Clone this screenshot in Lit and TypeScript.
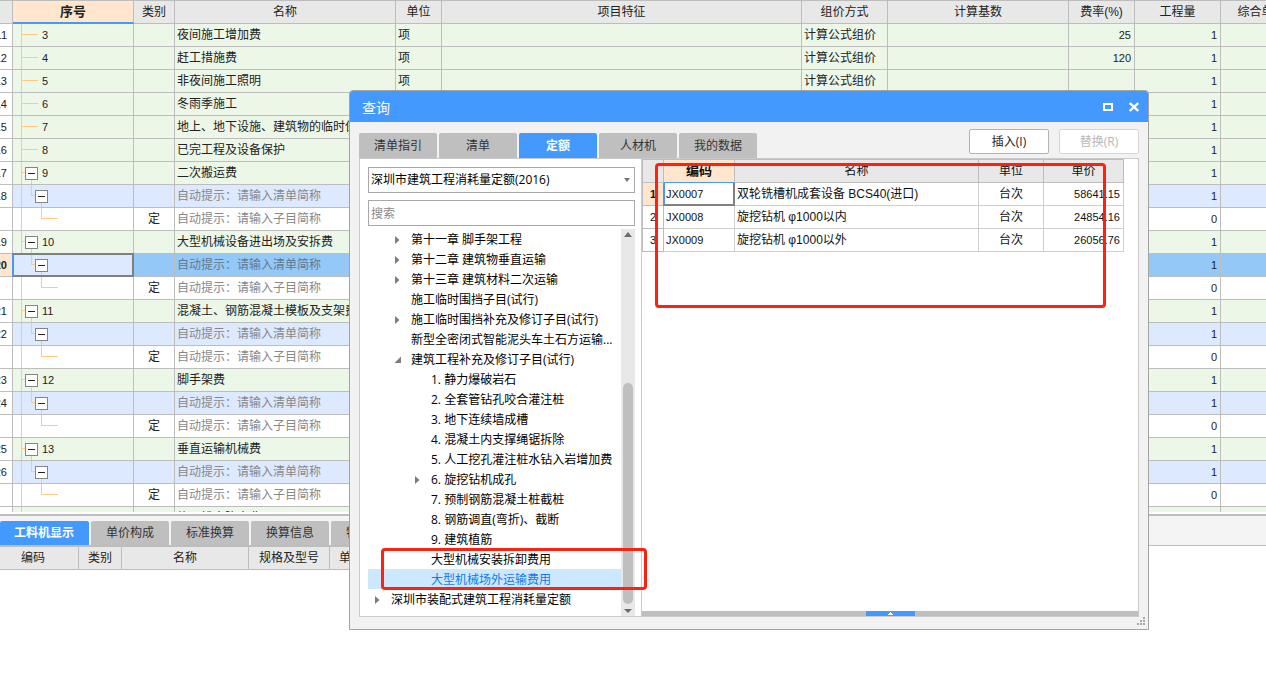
import { LitElement, html, svg, css, nothing } from "lit";
import { customElement, property, state } from "lit/decorators.js";
import { classMap } from "lit/directives/class-map.js";

type Kind = "item" | "list" | "sub";

interface CostRow {
  line: string;
  kind: Kind;
  seq?: string;
  open?: boolean;
  name: string;
  unit?: string;
  method?: string;
  rate?: string;
  qty: string;
  selected?: boolean;
}

const LIST_HINT = "自动提示：请输入清单简称";
const SUB_HINT = "自动提示：请输入子目简称";

const plain = (line: string, seq: string, name: string, rate = ""): CostRow => ({
  line, kind: "item", seq, name, unit: "项", method: "计算公式组价", rate, qty: "1",
});

const group = (line: number, seq: string, name: string, selected = false): CostRow[] => [
  { line: `${line}`, kind: "item", seq, open: true, name, unit: "项", qty: "1" },
  { line: `${line + 1}`, kind: "list", name: LIST_HINT, qty: "1", selected },
  { line: "", kind: "sub", name: SUB_HINT, qty: "0" },
];

const ROWS: CostRow[] = [
  plain("11", "3", "夜间施工增加费", "25"),
  plain("12", "4", "赶工措施费", "120"),
  plain("13", "5", "非夜间施工照明"),
  plain("14", "6", "冬雨季施工"),
  plain("15", "7", "地上、地下设施、建筑物的临时保护设施"),
  plain("16", "8", "已完工程及设备保护"),
  ...group(17, "9", "二次搬运费"),
  ...group(19, "10", "大型机械设备进出场及安拆费", true),
  ...group(21, "11", "混凝土、钢筋混凝土模板及支架费"),
  ...group(23, "12", "脚手架费"),
  ...group(25, "13", "垂直运输机械费"),
  { line: "27", kind: "item", seq: "14", open: true, name: "施工排水降水费", qty: "1" },
];

@customElement("cost-grid")
export class CostGrid extends LitElement {
  static styles = css`
    :host {
      display: block;
      min-height: 0;
      overflow: hidden;
      font: 12px/20px "Liberation Sans", "Noto Sans CJK SC", sans-serif;
      color: #222;
    }
    .grid {
      width: calc(100% + 37px);
      table-layout: fixed;
      border-collapse: separate;
      border-spacing: 0;
      border-top: 1px solid #bdbdbd;
    }
    .c-line { width: 13px; }
    .c-seq { width: 121px; }
    .c-kind { width: 41px; }
    .c-name { width: 221px; }
    .c-unit { width: 46px; }
    .c-method { width: 86px; }
    .c-base { width: 181px; }
    .c-rate { width: 66px; }
    .c-qty { width: 86px; }
    .c-price { width: 82px; }
    th, td {
      box-sizing: border-box;
      height: 23px;
      padding: 0 2px;
      border-right: 1px solid #bdbdbd;
      border-bottom: 1px solid #bdbdbd;
      white-space: nowrap;
      overflow: hidden;
    }
    th { background: #e8e8e8; font-weight: 400; }
    .current-head {
      background: #ffe6cc;
      border-bottom: 2px solid #4499ff;
      font-size: 13px;
      font-weight: 700;
    }
    .item td { background: #ecf7e8; }
    .list td { background: #dde9fe; }
    .sub td { background: #fff; }
    .selected td { background: #93c8f7; }
    tr .line { background: #fff; padding: 0; }
    tr.selected .line { background: #ffe6cc; font-weight: 700; }
    .line-no {
      display: flex;
      justify-content: flex-end;
      padding-right: 5px;
      font-size: 11px;
    }
    tr .tree-cell { padding: 0; position: relative; overflow: visible; }
    tr.selected .tree-cell { background: #dde9fe; }
    tr.selected .tree-cell::after {
      content: "";
      position: absolute;
      inset: -1px;
      border: 2px solid #808080;
      border-left-color: #4499ff;
      pointer-events: none;
    }
    .lines { position: absolute; left: 0; top: 0; }
    .node { display: flex; align-items: center; gap: 4px; height: 22px; font-size: 11px; }
    .node.leaf { padding-left: 29px; }
    .node.parent { padding-left: 12px; }
    .node.child { padding-left: 22px; }
    .toggle {
      position: relative;
      display: block;
      width: 13px;
      height: 13px;
      padding: 0;
      border: 1px solid #858585;
      background: #fff;
    }
    .toggle svg { display: block; }
    .center { text-align: center; }
    .num { text-align: right; font-size: 11px; padding-right: 3px; }
    .hint { color: #888; }
    .selected .hint { color: #64798d; }
  `;

  private lines(r: CostRow) {
    const trunk = r.selected ? "" : "M8.5 0V22";
    const branch =
      r.kind === "item"
        ? r.open ? "M9 10.5H12M18.5 17V22" : "M9 10.5H25"
        : r.kind === "list"
          ? "M18.5 0V10.5H22M28.5 17V22"
          : "M28.5 0V10.5H45";
    return html`<svg class="lines" width="46" height="22" aria-hidden="true">
      ${svg`<path d=${trunk + branch} fill="none" stroke="#ffc980" shape-rendering="crispEdges" />`}
    </svg>`;
  }

  private toggle() {
    return html`<button class="toggle" aria-label="折叠">
      <svg width="11" height="11"><path d="M2 5.5H9" stroke="#222" /></svg>
    </button>`;
  }

  private node(r: CostRow) {
    if (r.kind === "item") {
      return r.open
        ? html`<div class="node parent">${this.toggle()}<span>${r.seq}</span></div>`
        : html`<div class="node leaf"><span>${r.seq}</span></div>`;
    }
    return html`<div class="node child">${r.kind === "list" ? this.toggle() : nothing}</div>`;
  }

  render() {
    return html`
      <table class="grid">
        <colgroup>
          <col class="c-line" /><col class="c-seq" /><col class="c-kind" /><col class="c-name" />
          <col class="c-unit" /><col /><col class="c-method" /><col class="c-base" />
          <col class="c-rate" /><col class="c-qty" /><col class="c-price" />
        </colgroup>
        <thead>
          <tr>
            <th></th><th class="current-head">序号</th><th>类别</th><th>名称</th><th>单位</th>
            <th>项目特征</th><th>组价方式</th><th>计算基数</th><th>费率(%)</th><th>工程量</th>
            <th>综合单价</th>
          </tr>
        </thead>
        <tbody>
          ${ROWS.map(
            (r) => html`<tr class=${classMap({ [r.kind]: true, selected: !!r.selected })}>
              <td class="line"><div class="line-no">${r.line}</div></td>
              <td class="tree-cell">${this.lines(r)}${this.node(r)}</td>
              <td class="center">${r.kind === "sub" ? "定" : ""}</td>
              <td class=${r.kind === "item" ? "" : "hint"}>${r.name}</td>
              <td>${r.unit ?? ""}</td>
              <td></td>
              <td>${r.method ?? ""}</td>
              <td></td>
              <td class="num">${r.rate ?? ""}</td>
              <td class="num">${r.qty}</td>
              <td></td>
            </tr>`
          )}
        </tbody>
      </table>
    `;
  }
}

@customElement("detail-pane")
export class DetailPane extends LitElement {
  static styles = css`
    :host {
      display: block;
      box-sizing: border-box;
      height: 177px;
      border-top: 2px solid #bdbdbd;
      background: #fff;
      font: 12px/20px "Liberation Sans", "Noto Sans CJK SC", sans-serif;
      color: #222;
      overflow: hidden;
    }
    .tabs {
      display: flex;
      gap: 2px;
      padding-top: 5px;
      background: #f4f4f4;
      border-bottom: 1px solid #bdbdbd;
    }
    .tab {
      height: 24px;
      padding: 0 15px;
      border: 0;
      border-radius: 2px 2px 0 0;
      background: #bfbfbf;
      color: #333;
      font: inherit;
      white-space: nowrap;
    }
    .tab.active { padding-left: 14px; background: #4499ff; color: #fff; font-weight: 700; }
    .head {
      width: 640px;
      table-layout: fixed;
      border-collapse: separate;
      border-spacing: 0;
      border-top: 1px solid #bdbdbd;
    }
    .head th {
      box-sizing: border-box;
      height: 23px;
      padding: 0;
      border-right: 1px solid #bdbdbd;
      border-bottom: 1px solid #bdbdbd;
      background: #e8e8e8;
      font-weight: 400;
    }
    .head .code { width: 79px; padding-right: 12px; }
    .kind { width: 43px; }
    .name { width: 127px; }
    .spec { width: 81px; }
    .unit { width: 43px; }
  `;

  render() {
    const tabs = ["工料机显示", "单价构成", "标准换算", "换算信息", "特征及内容"];
    return html`
      <div class="tabs" role="tablist">
        ${tabs.map(
          (t, i) => html`<button role="tab" class="tab ${i === 0 ? "active" : ""}">${t}</button>`
        )}
      </div>
      <table class="head">
        <thead>
          <tr>
            <th class="code">编码</th><th class="kind">类别</th><th class="name">名称</th>
            <th class="spec">规格及型号</th><th class="unit">单位</th><th></th>
          </tr>
        </thead>
      </table>
    `;
  }
}

interface Chapter {
  level: 0 | 1 | 2;
  text: string;
  mark?: "closed" | "open";
  selected?: boolean;
}

const CHAPTERS: Chapter[] = [
  { level: 1, text: "第十一章 脚手架工程", mark: "closed" },
  { level: 1, text: "第十二章 建筑物垂直运输", mark: "closed" },
  { level: 1, text: "第十三章 建筑材料二次运输", mark: "closed" },
  { level: 1, text: "施工临时围挡子目(试行)" },
  { level: 1, text: "施工临时围挡补充及修订子目(试行)", mark: "closed" },
  { level: 1, text: "新型全密闭式智能泥头车土石方运输..." },
  { level: 1, text: "建筑工程补充及修订子目(试行)", mark: "open" },
  { level: 2, text: "1. 静力爆破岩石" },
  { level: 2, text: "2. 全套管钻孔咬合灌注桩" },
  { level: 2, text: "3. 地下连续墙成槽" },
  { level: 2, text: "4. 混凝土内支撑绳锯拆除" },
  { level: 2, text: "5. 人工挖孔灌注桩水钻入岩增加费" },
  { level: 2, text: "6. 旋挖钻机成孔", mark: "closed" },
  { level: 2, text: "7. 预制钢筋混凝土桩截桩" },
  { level: 2, text: "8. 钢筋调直(弯折)、截断" },
  { level: 2, text: "9. 建筑植筋" },
  { level: 2, text: "大型机械安装拆卸费用" },
  { level: 2, text: "大型机械场外运输费用", selected: true },
  { level: 0, text: "深圳市装配式建筑工程消耗量定额", mark: "closed" },
];

@customElement("chapter-tree")
export class ChapterTree extends LitElement {
  static styles = css`
    :host { display: flex; min-height: 0; overflow: hidden; color: #000; }
    .list { flex: 1; min-width: 0; margin: 0; padding: 0; list-style: none; }
    .row {
      display: flex;
      align-items: center;
      box-sizing: border-box;
      height: 20px;
      padding-top: 2px;
      white-space: nowrap;
    }
    .level-1 { padding-left: 20px; }
    .level-2 { padding-left: 40px; }
    .selected { background: #cce8ff; color: #1677ea; }
    .slot { flex: none; width: 23px; height: 20px; }
    .mark { display: block; width: 23px; height: 20px; padding: 0; border: 0; background: none; }
    .mark svg { display: block; }
    .bar {
      display: flex;
      flex-direction: column;
      width: 14px;
      background: #e8e8e8;
    }
    .bar svg { display: block; flex: none; }
    .rail { flex: 1; display: flex; flex-direction: column; justify-content: flex-end; padding: 0 2px; }
    .thumb { height: 61%; border-radius: 5px; background: #bfbfbf; }
  `;

  private mark(c: Chapter) {
    if (!c.mark) return nothing;
    const d = c.mark === "closed" ? "M7 6L11.5 10L7 14Z" : "M13 13H6.5L13 6.5Z";
    return html`<button class="mark" aria-label=${c.mark === "closed" ? "展开" : "折叠"}>
      <svg width="23" height="20"><path d=${d} fill="#7c7c7c" /></svg>
    </button>`;
  }

  render() {
    return html`
      <ul class="list">
        ${CHAPTERS.map(
          (c) => html`<li class="row level-${c.level} ${c.selected ? "selected" : ""}">
            <span class="slot">${this.mark(c)}</span><span>${c.text}</span>
          </li>`
        )}
      </ul>
      <div class="bar">
        <svg width="14" height="12"><path d="M3 8L7 3L11 8Z" fill="#6b6b76" /></svg>
        <div class="rail"><div class="thumb"></div></div>
        <svg width="14" height="12"><path d="M3 5H11L7 9Z" fill="#6b6b76" /></svg>
      </div>
    `;
  }
}

@customElement("quota-table")
export class QuotaTable extends LitElement {
  static styles = css`
    :host {
      display: block;
      font: 12px/20px "Liberation Sans", "Noto Sans CJK SC", sans-serif;
      color: #111;
    }
    .quota {
      width: 482px;
      table-layout: fixed;
      border-collapse: separate;
      border-spacing: 0;
      border-top: 1px solid #bdbdbd;
      border-left: 1px solid #bdbdbd;
    }
    .c-no { width: 21px; }
    .c-code { width: 71px; }
    .c-unit { width: 65px; }
    .c-price { width: 80px; }
    th, td {
      box-sizing: border-box;
      height: 23px;
      padding: 0 2px;
      border-right: 1px solid #cfcfcf;
      border-bottom: 1px solid #cfcfcf;
      white-space: nowrap;
    }
    th { background: #e8e8e8; border-color: #bdbdbd; font-weight: 400; }
    .current-head { background: #ffe6cc; border-bottom-color: #4499ff; font-size: 13px; font-weight: 700; }
    .no { padding: 0; text-align: center; font-size: 11px; border-color: #bdbdbd; }
    .current .no { background: #ffe6cc; font-weight: 700; }
    .code { position: relative; font-size: 11px; }
    .current .code::after {
      content: "";
      position: absolute;
      inset: 0 -1px -1px -1px;
      border: 2px solid #808080;
      border-top: 0;
      border-left-color: #4499ff;
    }
    .center { text-align: center; }
    .num { text-align: right; font-size: 11px; padding-right: 3px; }
  `;

  render() {
    const rows = [
      ["JX0007", "双轮铣槽机成套设备 BCS40(进口)", "台次", "58641.15"],
      ["JX0008", "旋挖钻机 φ1000以内", "台次", "24854.16"],
      ["JX0009", "旋挖钻机 φ1000以外", "台次", "26056.76"],
    ];
    return html`
      <table class="quota">
        <colgroup>
          <col class="c-no" /><col class="c-code" /><col /><col class="c-unit" /><col class="c-price" />
        </colgroup>
        <thead>
          <tr><th></th><th class="current-head">编码</th><th>名称</th><th>单位</th><th>单价</th></tr>
        </thead>
        <tbody>
          ${rows.map(
            ([code, name, unit, price], i) => html`<tr class=${i === 0 ? "current" : ""}>
              <td class="no">${i + 1}</td>
              <td class="code">${code}</td>
              <td>${name}</td>
              <td class="center">${unit}</td>
              <td class="num">${price}</td>
            </tr>`
          )}
        </tbody>
      </table>
    `;
  }
}

@customElement("query-dialog")
export class QueryDialog extends LitElement {
  @property({ type: String }) heading = "";
  @state() private tab = 2;

  static styles = css`
    :host {
      display: flex;
      flex-direction: column;
      box-sizing: border-box;
      border: 1px solid #a3a3a3;
      border-radius: 4px 4px 0 0;
      background: #f2f2f2;
      font: 12px/20px "Open Sans", "Noto Sans CJK SC", sans-serif;
      color: #333;
    }
    .title {
      display: flex;
      align-items: center;
      height: 31px;
      padding: 0 9px 0 12px;
      border-radius: 3px 3px 0 0;
      background: #4499ff;
      color: #fff;
    }
    .title h1 { flex: 1; margin: 0; padding-top: 2px; font-size: 14px; font-weight: 400; }
    .title button { display: block; width: 10px; height: 10px; padding: 0; border: 0; background: none; }
    .title svg { display: block; }
    .window-buttons { display: flex; gap: 16px; }
    .strip { display: flex; align-items: flex-end; gap: 2px; height: 36px; padding: 0 9px; }
    .tab {
      width: 78px;
      height: 25px;
      padding: 0;
      border: 0;
      border-radius: 2px 2px 0 0;
      background: #bfbfbf;
      color: #333;
      font: inherit;
    }
    .tab.active { background: #4499ff; color: #fff; font-weight: 700; }
    .actions { display: flex; flex: 1; justify-content: flex-end; gap: 10px; padding-bottom: 4px; }
    .action {
      width: 80px;
      height: 25px;
      padding: 0;
      border: 1px solid #b3b3b3;
      border-radius: 2px;
      background: #fff;
      color: #222;
      font: inherit;
    }
    .action:disabled { border-color: #d6d6d6; color: #b8b8b8; }
    .body {
      display: flex;
      flex: 1;
      min-height: 0;
      margin: 0 9px;
      border: 1px solid #cacaca;
      background: #fff;
    }
    .side {
      display: flex;
      flex-direction: column;
      box-sizing: border-box;
      width: 282px;
      padding: 8px 6px 0 8px;
      border-right: 1px solid #cacaca;
    }
    .pick { position: relative; height: 26px; margin-bottom: 7px; }
    .pick select, .search {
      box-sizing: border-box;
      width: 100%;
      height: 26px;
      margin: 0;
      padding: 0 2px;
      border: 1px solid #a8a8a8;
      border-radius: 0;
      background: #fff;
      color: #000;
      font: inherit;
      appearance: none;
      outline: 0;
    }
    .pick svg { position: absolute; right: 5px; top: 11px; pointer-events: none; }
    .search { flex: none; margin-bottom: 3px; }
    .search::placeholder { color: #8a8a8a; opacity: 1; }
    chapter-tree { flex: 1; }
    .main { display: flex; flex-direction: column; flex: 1; min-width: 0; }
    quota-table { flex: 1; }
    .splitter { display: flex; justify-content: center; height: 5px; background: #bfbfbf; }
    .splitter button { width: 49px; height: 5px; padding: 0; border: 0; background: #4499ff; }
    .splitter svg { display: block; margin: 0 auto; }
    .foot { display: flex; justify-content: flex-end; height: 12px; padding-right: 3px; }
  `;

  render() {
    const tabs = ["清单指引", "清单", "定额", "人材机", "我的数据"];
    return html`
      <header class="title">
        <h1>${this.heading}</h1>
        <div class="window-buttons">
          <button aria-label="最大化">
            <svg width="10" height="10"><path d="M1 2H9V8H1Z" fill="none" stroke="#fff" stroke-width="2" /></svg>
          </button>
          <button aria-label="关闭">
            <svg width="10" height="10"><path d="M0.8 1L9.2 9M9.2 1L0.8 9" stroke="#fff" stroke-width="2.4" /></svg>
          </button>
        </div>
      </header>
      <div class="strip">
        ${tabs.map(
          (t, i) => html`<button
            class="tab ${i === this.tab ? "active" : ""}"
            @click=${() => (this.tab = i)}
          >${t}</button>`
        )}
        <div class="actions">
          <button class="action">插入(I)</button>
          <button class="action" disabled>替换(R)</button>
        </div>
      </div>
      <div class="body">
        <div class="side">
          <div class="pick">
            <select aria-label="定额库">
              <option>深圳市建筑工程消耗量定额(2016)</option>
            </select>
            <svg width="6" height="4"><path d="M0 0H6L3 4Z" fill="#767676" /></svg>
          </div>
          <input class="search" type="text" placeholder="搜索" aria-label="搜索" />
          <chapter-tree></chapter-tree>
        </div>
        <div class="main">
          <quota-table></quota-table>
          <div class="splitter">
            <button aria-label="展开">
              <svg width="5" height="5"><path d="M0 4V3H1V2H2V1H3V2H4V3H5V4Z" fill="#fff" /></svg>
            </button>
          </div>
        </div>
      </div>
      <div class="foot">
        <svg width="8" height="8" aria-hidden="true">
          <path d="M6 0h2v2h-2zM3 3h2v2h-2zM6 3h2v2h-2zM0 6h2v2h-2zM3 6h2v2h-2zM6 6h2v2h-2z" fill="#a8a8a8" />
        </svg>
      </div>
    `;
  }
}

@customElement("app-root")
export class AppRoot extends LitElement {
  static styles = css`
    :host {
      position: relative;
      display: grid;
      grid-template-rows: minmax(0, 1fr) auto;
      row-gap: 2px;
      height: 100vh;
      overflow: hidden;
      background: #fff;
    }
    .window { position: absolute; left: 349px; top: 90px; width: 800px; height: 540px; }
    .callout {
      position: absolute;
      box-sizing: border-box;
      border: 3px solid #ff2010;
      border-radius: 4px;
      pointer-events: none;
    }
    .results { left: 655px; top: 163px; width: 451px; height: 145px; }
    .choices { left: 381px; top: 548px; width: 266px; height: 42px; }
  `;

  render() {
    return html`
      <cost-grid></cost-grid>
      <detail-pane></detail-pane>
      <query-dialog class="window" heading="查询"></query-dialog>
      <div class="callout results"></div>
      <div class="callout choices"></div>
    `;
  }
}
